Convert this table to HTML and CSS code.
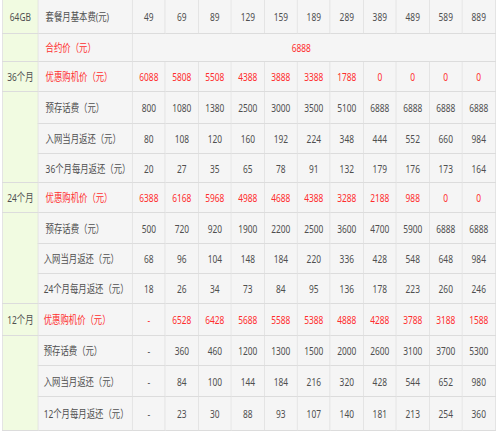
FILE: index.html
```html
<!DOCTYPE html>
<html lang="zh-CN">
<head>
<meta charset="utf-8">
<title>套餐价格表</title>
<link rel="stylesheet" href="styles.css">
</head>
<body>
<div class="frame">
<table class="price">
  <colgroup>
    <col class="c-group"><col class="c-label">
    <col class="c-val"><col class="c-val"><col class="c-val"><col class="c-val"><col class="c-val"><col class="c-val"><col class="c-val"><col class="c-val"><col class="c-val"><col class="c-val"><col class="c-val">
  </colgroup>
  <tbody>
    <tr class="h34">
      <td class="grp">64GB</td><td class="lbl">套餐月基本费(元)</td>
      <td>49</td><td>69</td><td>89</td><td>129</td><td>159</td><td>189</td><td>289</td><td>389</td><td>489</td><td>589</td><td>889</td>
    </tr>
    <tr class="h28">
      <td class="grp"></td><td class="lbl red">合约价（元）</td>
      <td colspan="11" class="red span">6888</td>
    </tr>
    <tr class="h30">
      <td class="grp">36个月</td><td class="lbl red">优惠购机价（元）</td>
      <td class="red">6088</td><td class="red">5808</td><td class="red">5508</td><td class="red">4388</td><td class="red">3888</td><td class="red">3388</td><td class="red">1788</td><td class="red">0</td><td class="red">0</td><td class="red">0</td><td class="red">0</td>
    </tr>
    <tr class="h32">
      <td class="grp" rowspan="3"></td><td class="lbl">预存话费（元）</td>
      <td>800</td><td>1080</td><td>1380</td><td>2500</td><td>3000</td><td>3500</td><td>5100</td><td>6888</td><td>6888</td><td>6888</td><td>6888</td>
    </tr>
    <tr class="h30">
      <td class="lbl">入网当月返还（元）</td>
      <td>80</td><td>108</td><td>120</td><td>160</td><td>192</td><td>224</td><td>348</td><td>444</td><td>552</td><td>660</td><td>984</td>
    </tr>
    <tr class="h29">
      <td class="lbl">36个月每月返还（元）</td>
      <td>20</td><td>27</td><td>35</td><td>65</td><td>78</td><td>91</td><td>132</td><td>179</td><td>176</td><td>173</td><td>164</td>
    </tr>
    <tr class="h30">
      <td class="grp">24个月</td><td class="lbl red">优惠购机价（元）</td>
      <td class="red">6388</td><td class="red">6168</td><td class="red">5968</td><td class="red">4988</td><td class="red">4688</td><td class="red">4388</td><td class="red">3288</td><td class="red">2188</td><td class="red">988</td><td class="red">0</td><td class="red">0</td>
    </tr>
    <tr class="h31">
      <td class="grp" rowspan="3"></td><td class="lbl">预存话费（元）</td>
      <td>500</td><td>720</td><td>920</td><td>1900</td><td>2200</td><td>2500</td><td>3600</td><td>4700</td><td>5900</td><td>6888</td><td>6888</td>
    </tr>
    <tr class="h30">
      <td class="lbl tight">入网当月返还（元）</td>
      <td>68</td><td>96</td><td>104</td><td>148</td><td>184</td><td>220</td><td>336</td><td>428</td><td>548</td><td>648</td><td>984</td>
    </tr>
    <tr class="h30">
      <td class="lbl tight">24个月每月返还（元）</td>
      <td>18</td><td>26</td><td>34</td><td>73</td><td>84</td><td>95</td><td>136</td><td>178</td><td>223</td><td>260</td><td>246</td>
    </tr>
    <tr class="h32">
      <td class="grp">12个月</td><td class="lbl red tight">优惠购机价（元）</td>
      <td class="red">-</td><td class="red">6528</td><td class="red">6428</td><td class="red">5688</td><td class="red">5588</td><td class="red">5388</td><td class="red">4888</td><td class="red">4288</td><td class="red">3788</td><td class="red">3188</td><td class="red">1588</td>
    </tr>
    <tr class="h30">
      <td class="grp" rowspan="3"></td><td class="lbl tight">预存话费（元）</td>
      <td>-</td><td>360</td><td>460</td><td>1200</td><td>1300</td><td>1500</td><td>2000</td><td>2600</td><td>3100</td><td>3700</td><td>5300</td>
    </tr>
    <tr class="h31">
      <td class="lbl tight">入网当月返还（元）</td>
      <td>-</td><td>84</td><td>100</td><td>144</td><td>184</td><td>216</td><td>320</td><td>428</td><td>544</td><td>652</td><td>980</td>
    </tr>
    <tr class="h34">
      <td class="lbl tight">12个月每月返还（元）</td>
      <td>-</td><td>23</td><td>30</td><td>88</td><td>93</td><td>107</td><td>140</td><td>181</td><td>213</td><td>254</td><td>360</td>
    </tr>
  </tbody>
</table>
</div>
</body>
</html>
```

FILE: styles.css
```css
html, body {
  margin: 0;
  padding: 0;
  background: #ffffff;
  overflow: hidden;
}

body {
  padding: 0 0 0 2px;
  font-family: "Noto Sans", "Noto Sans CJK SC", sans-serif;
  font-size: 11px;
  color: #4f4f4f;
}

.frame {
  width: 494px;
  overflow: hidden;
}

/* The source table is drawn horizontally condensed */
.price {
  border-collapse: collapse;
  table-layout: fixed;
  width: 648.7px;
  margin-top: -1px;
  transform: scaleX(0.76);
  transform-origin: 0 0;
}

.c-group { width: 47.37px; }
.c-label { width: 123.68px; }
.c-val { width: 43.42px; }

.price td {
  border: 1px solid #dcdcdc;
  background: #f5f5f5;
  text-align: center;
  padding: 0;
  white-space: nowrap;
  overflow: hidden;
  line-height: 15px;
}

.price td.grp {
  background: #f1fbe1;
}

.price td.lbl {
  text-align: left;
  padding-left: 9px;
}

.price td.lbl.tight {
  padding-left: 6.5px;
}

.price td.red {
  color: #ff2d2d;
}

.price td.span {
  padding-right: 33px;
}

.h28 { height: 28px; }
.h29 { height: 29px; }
.h30 { height: 30px; }
.h31 { height: 31px; }
.h32 { height: 32px; }
.h34 { height: 34px; }
```
